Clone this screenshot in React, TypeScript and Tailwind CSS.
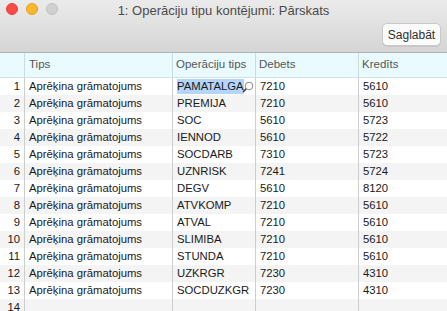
import React from "react";

const rows: [string, string, string][] = [
  ["PAMATALGA", "7210", "5610"],
  ["PREMIJA", "7210", "5610"],
  ["SOC", "5610", "5723"],
  ["IENNOD", "5610", "5722"],
  ["SOCDARB", "7310", "5723"],
  ["UZNRISK", "7241", "5724"],
  ["DEGV", "5610", "8120"],
  ["ATVKOMP", "7210", "5610"],
  ["ATVAL", "7210", "5610"],
  ["SLIMIBA", "7210", "5610"],
  ["STUNDA", "7210", "5610"],
  ["UZKRGR", "7230", "4310"],
  ["SOCDUZKGR", "7230", "4310"],
];

const font = { fontFamily: '"Helvetica Neue", "Liberation Sans", Arial, sans-serif' };

export default function App() {
  return (
    <div className="w-[447px] h-[311px] overflow-hidden bg-white flex flex-col" style={font}>
      <div className="h-[53px] shrink-0 bg-gradient-to-b from-[#ebebeb] to-[#d5d5d5] border-b border-[#b1b1b1] flex flex-col">
        <div className="relative h-[20px] flex items-center">
          <div className="absolute left-[6px] top-[3px] flex gap-[8px]">
            <div className="w-[12px] h-[12px] rounded-full bg-[#fc4a45] border border-[#e0443e]" />
            <div className="w-[12px] h-[12px] rounded-full bg-[#fdb82a] border border-[#dea123]" />
            <div className="w-[12px] h-[12px] rounded-full bg-[#d0d0d0] border border-[#c0c0c0]" />
          </div>
          <div className="w-full text-center text-[13px] text-[#4b4b4b] pt-[1px]">
            1: Operāciju tipu kontējumi: Pārskats
          </div>
        </div>
        <div className="flex justify-end pr-[6px] pt-[3px]">
          <div className="h-[23px] w-[59px] rounded-[5px] bg-[#fbfbfb] border border-[#c9c9c9] shadow-[0_1px_0_rgba(0,0,0,0.08)] flex items-center justify-center text-[12px] text-[#2f2f2f]">
            Saglabāt
          </div>
        </div>
      </div>
      <div className="h-[25px] shrink-0 bg-[#e9fbfe] border-b border-[#cfe3e8] flex text-[11.5px] text-[#555]">
        <div className="w-[25px] border-r border-[#c8dde2]" />
        <div className="w-[148px] border-r border-[#c8dde2] pl-[4px] flex items-center">Tips</div>
        <div className="w-[83px] border-r border-[#c8dde2] pl-[3px] flex items-center">Operāciju tips</div>
        <div className="w-[103px] border-r border-[#c8dde2] pl-[3px] flex items-center">Debets</div>
        <div className="flex-1 pl-[3px] flex items-center">Kredīts</div>
      </div>
      <div className="flex flex-col text-[11.3px] text-[#1a1a1a]">
        {rows.map((r, i) => (
          <div key={i} className={`h-[17px] flex ${i % 2 === 0 ? "bg-white" : "bg-[#f4f4f4]"}`}>
            <div className="w-[25px] border-r border-[#cdcdcd] pr-[4px] text-right leading-[17px]">{i + 1}</div>
            <div className="w-[148px] border-r border-[#cdcdcd] pl-[4px] leading-[17px]">Aprēķina grāmatojums</div>
            <div className="w-[83px] border-r border-[#cdcdcd] pl-[4px] leading-[17px] flex items-center whitespace-nowrap">
              {i === 0 ? (
                <>
                  <span className="bg-[#b4d6fd] leading-[15px] inline-block">PAMATALGA</span>
                  <svg className="ml-[-3px] mt-[2px]" width="13" height="13" viewBox="0 0 13 13">
                    <circle cx="8" cy="5" r="3.8" fill="white" stroke="#8a8a8a" strokeWidth="1" />
                    <line x1="5.2" y1="7.8" x2="2" y2="11" stroke="#333" strokeWidth="1.6" />
                  </svg>
                </>
              ) : (
                r[0]
              )}
            </div>
            <div className="w-[103px] border-r border-[#cdcdcd] pl-[4px] leading-[17px]">{r[1]}</div>
            <div className="flex-1 pl-[4px] leading-[17px]">{r[2]}</div>
          </div>
        ))}
        <div className="h-[17px] flex bg-[#f4f4f4]">
          <div className="w-[25px] border-r border-[#cdcdcd] pr-[4px] text-right leading-[17px]">14</div>
          <div className="w-[148px] border-r border-[#cdcdcd]" />
          <div className="w-[83px] border-r border-[#cdcdcd]" />
          <div className="w-[103px] border-r border-[#cdcdcd]" />
          <div className="flex-1" />
        </div>
      </div>
    </div>
  );
}
